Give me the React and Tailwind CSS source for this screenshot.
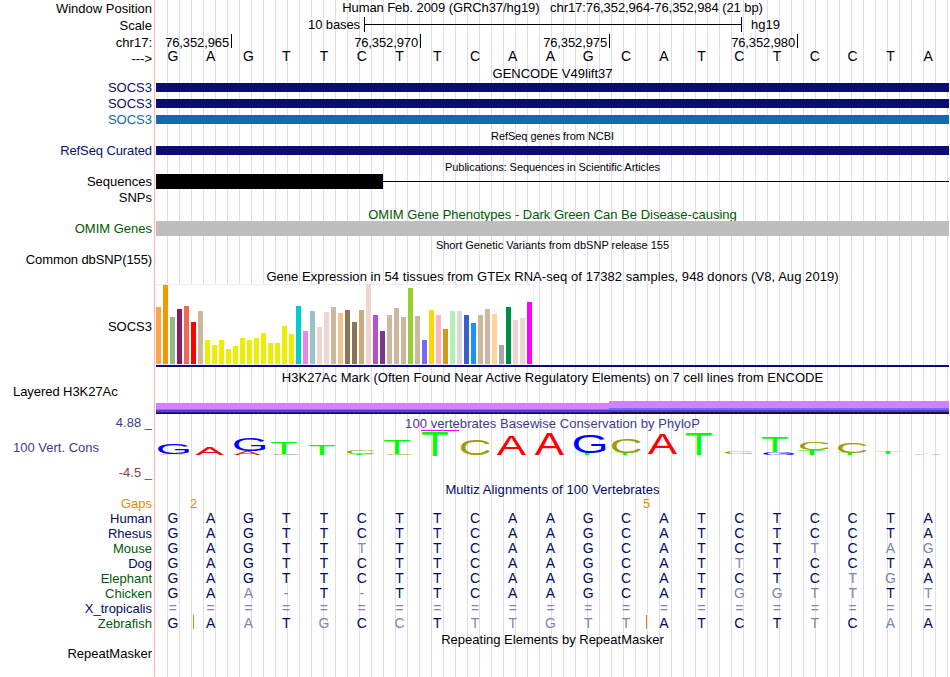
import React from 'react';

const REFERENCE = 'GAGTTCTTCAAGCATCTCCTA';

const species = [
  { name: 'Human', color: 'text-[#000a64]', bases: 'GAGTTCTTCAAGCATCTCCTA' },
  { name: 'Rhesus', color: 'text-[#000a64]', bases: 'GAGTTCTTCAAGCATCTCCTA' },
  { name: 'Mouse', color: 'text-[#005a0a]', bases: 'GAGTTTTTCAAGCATCTTCAG' },
  { name: 'Dog', color: 'text-[#000a64]', bases: 'GAGTTCTTCAAGCATTTCCTA' },
  { name: 'Elephant', color: 'text-[#005a0a]', bases: 'GAGTTCTTCAAGCATCTCTGA' },
  { name: 'Chicken', color: 'text-[#005a0a]', bases: 'GAA-T-TTCAAGCATGGTTTT' },
  { name: 'X_tropicalis', color: 'text-[#000a64]', bases: '=====================' },
  { name: 'Zebrafish', color: 'text-[#005a0a]', bases: 'GAATGCCTTTGTTATCTTCAA', inserts: true },
];

const tissues = [
  [57, '#ffa54f'], [79, '#ee9a00'], [47, '#8fbc8f'], [55, '#8b1c62'], [58, '#ee6a50'], [42, '#ff0000'],
  [53, '#cdb79e'], [24, '#eeee00'], [19, '#eeee00'], [24, '#eeee00'], [15, '#eeee00'], [18, '#eeee00'],
  [26, '#eeee00'], [24, '#eeee00'], [26, '#eeee00'], [31, '#eeee00'], [21, '#eeee00'], [21, '#eeee00'],
  [38, '#eeee00'], [30, '#eeee00'], [58, '#00cdcd'], [33, '#ee82ee'], [53, '#9ac0cd'], [37, '#eed5d2'],
  [52, '#eed5d2'], [57, '#cdb79e'], [51, '#eec591'], [54, '#8b7355'], [42, '#8b7355'], [54, '#cdaa7d'],
  [80, '#eed5d2'], [49, '#b452cd'], [33, '#7a378b'], [49, '#cdb79e'], [56, '#cdb79e'], [47, '#cdb79e'],
  [76, '#9acd32'], [48, '#cdb79e'], [24, '#7a67ee'], [54, '#ffd700'], [49, '#ffb6c1'], [35, '#cd9b1d'],
  [53, '#b4eeb4'], [53, '#d9d9d9'], [49, '#3a5fcd'], [41, '#1e90ff'], [49, '#cdb79e'], [55, '#cdb79e'],
  [50, '#ffd39b'], [19, '#a6a6a6'], [57, '#008b45'], [44, '#eed5d2'], [46, '#eed5d2'], [62, '#ff00ff'],
];

// letter, left, right, top, bottom (track pixels)
const logo = [
  ['A', 3, 30, 24, 25], ['G', 2, 33, 14, 24.3],
  ['A', 39.3, 67.7, 17, 25],
  ['A', 78, 105, 21, 25], ['G', 78, 109.3, 8, 21],
  ['C', 117, 144, 24, 25], ['T', 115, 141, 12.7, 24],
  ['T', 153, 179, 15, 25],
  ['T', 190, 216, 24, 25], ['C', 191, 219, 20, 24],
  ['C', 230, 257, 24, 25], ['T', 228, 254, 10, 24],
  ['T', 266, 292, 2, 26],
  ['C', 305, 334, 9, 25],
  ['A', 341, 370, 6, 25],
  ['A', 379, 408, 4, 25],
  ['T', 418, 444, 23, 25], ['G', 418, 449.7, 5, 23],
  ['T', 456, 482, 23, 25], ['C', 456, 485, 9, 23],
  ['A', 492, 521, 4, 24],
  ['T', 530, 556, 4, 25],
  ['C', 569, 597, 21.3, 24],
  ['G', 607, 638, 22, 25], ['T', 606, 632, 7, 22],
  ['T', 643, 669, 20, 25], ['C', 644, 673, 12, 20],
  ['T', 681, 707, 23, 25], ['C', 682, 711, 12, 23],
  ['T', 719, 745, 22, 24],
  ['A', 758, 785, 24, 25],
];

// ink box of each capital in units of a 100px font: left, width, above, below
const glyphs = {
  A: { left: 0.4, width: 66, up: 68.8, down: 0, fill: '#ff0000' },
  C: { left: 5, width: 63.5, up: 69.8, down: 1, fill: '#a09b00' },
  G: { left: 5, width: 66.3, up: 69.8, down: 1, fill: '#0000ff' },
  T: { left: 2.1, width: 56.8, up: 68.8, down: 0, fill: '#00ff00' },
};

const Row = ({ height, label, labelClass = '', children }) => (
  <div className={`flex ${height}`}>
    <div className={`w-[152px] mr-1 shrink-0 text-right ${labelClass}`}>{label}</div>
    <div className="relative w-[793px] shrink-0">{children}</div>
  </div>
);

const Title = ({ className = '', children }) => (
  <div className={`text-center whitespace-pre ${className}`}>{children}</div>
);

const Bases = ({ bases, compare }) => (
  <div className="flex text-[14px] leading-[15px]">
    {bases.split('').map((base, i) => (
      <span
        key={i}
        className={`flex-1 pr-1 text-center ${
          compare ? (base === REFERENCE[i] ? 'text-[#000a64]' : 'text-[#8084b1]') : ''
        }`}
      >
        {base}
      </span>
    ))}
  </div>
);

const Position = ({ width, children }) => (
  <div className={`flex justify-end shrink-0 ${width}`}>
    <span className="mt-px mr-[2px] tracking-[-0.12px]">{children}</span>
    <span className="w-px h-[14px] bg-black" />
  </div>
);

const ConservationLogo = () => (
  <svg className="absolute left-0 top-[15px] overflow-visible" width="793" height="27" fontFamily="Liberation Sans, Arial, sans-serif" fontSize="100">
    <rect x="265" y="0" width="38" height="1" fill="#ff00ff" />
    {logo.map(([letter, left, right, top, bottom], i) => {
      const g = glyphs[letter];
      const sx = (right - left) / g.width;
      const sy = (bottom - top) / (g.up + g.down);
      return (
        <text
          key={i}
          fill={g.fill}
          transform={`translate(${left - g.left * sx} ${bottom - g.down * sy}) scale(${sx} ${sy})`}
        >
          {letter}
        </text>
      );
    })}
  </svg>
);

const App = () => {
  return (
    <div className="w-[950px] h-[677px] overflow-hidden bg-white">
      <div className="h-full bg-[linear-gradient(to_right,#ffb4b4_1px,transparent_1px)] bg-[length:800px_100%] bg-[position:154px_0] bg-no-repeat">
        <div className="relative h-full text-[13px] leading-[15px] text-black font-['Liberation_Sans',Arial,sans-serif]">
          <div className="absolute left-[156px] top-0 w-[793px] h-full bg-[linear-gradient(to_right,#dcdcf8_1px,transparent_1px)] bg-[length:12px_100%] bg-[position:11px_0]" />

          <div className="relative">
            <Row height="h-[17px]" label="Window Position" labelClass="pt-px">
              <Title className="tracking-[-0.075px]">Human Feb. 2009 (GRCh37/hg19)   chr17:76,352,964-76,352,984 (21 bp)</Title>
            </Row>
            <Row height="h-[17px]" label="Scale" labelClass="pt-px">
              <div className="flex">
                <span className="w-[208px] pr-[4px] text-right tracking-[-0.1px]">10 bases</span>
                <span className="w-[378px] h-[15px] border-x border-black flex items-center">
                  <span className="w-full h-px bg-black" />
                </span>
                <span className="pl-[9px]">hg19</span>
              </div>
            </Row>
            <Row height="h-[15px]" label="chr17:" labelClass="pt-px">
              <div className="flex">
                <Position width="w-[76px]">76,352,965</Position>
                <Position width="w-[189px]">76,352,970</Position>
                <Position width="w-[189px]">76,352,975</Position>
                <Position width="w-[188px]">76,352,980</Position>
              </div>
            </Row>
            <Row height="h-[17px]" label="--->" labelClass="pt-[2px]">
              <Bases bases={REFERENCE} />
            </Row>

            <Row height="h-[17px]">
              <Title>GENCODE V49lift37</Title>
            </Row>
            <Row height="h-[16px]" label="SOCS3" labelClass="-mt-[3px] text-[#0c0c78]">
              <div className="h-[9px] bg-[#0c0c78]" />
            </Row>
            <Row height="h-[16px]" label="SOCS3" labelClass="-mt-[3px] text-[#0c0c78]">
              <div className="h-[9px] bg-[#0c0c78]" />
            </Row>
            <Row height="h-[15px]" label="SOCS3" labelClass="-mt-[3px] text-[#0a6eaf]">
              <div className="h-[9px] bg-[#0a6eaf]" />
            </Row>

            <Row height="h-[16px]">
              <Title className="text-[11px] leading-[12px] tracking-[-0.05px]">RefSeq genes from NCBI</Title>
            </Row>
            <Row height="h-[15px]" label="RefSeq Curated" labelClass="-mt-[3px] text-[#0c0c78] tracking-[-0.1px]">
              <div className="h-[9px] bg-[#0c0c78]" />
            </Row>

            <Row height="h-[13px]">
              <Title className="text-[11px] leading-[12px] tracking-[-0.06px]">Publications: Sequences in Scientific Articles</Title>
            </Row>
            <Row height="h-[16px]" label="Sequences">
              <div className="flex items-center h-[15px]">
                <span className="w-[227px] h-full bg-black" />
                <span className="flex-1 h-px bg-black" />
              </div>
            </Row>
            <Row height="h-[17px]" label="SNPs" />

            <Row height="h-[14px]">
              <Title className="text-[#005a00]">OMIM Gene Phenotypes - Dark Green Can Be Disease-causing</Title>
            </Row>
            <Row height="h-[18px]" label="OMIM Genes" labelClass="text-[#005a00]">
              <div className="h-[15px] bg-[#bebebe]" />
            </Row>

            <Row height="h-[13px]">
              <Title className="text-[11px] leading-[12px]">Short Genetic Variants from dbSNP release 155</Title>
            </Row>
            <Row height="h-[17px]" label="Common dbSNP(155)" labelClass="tracking-[-0.1px]" />

            <Row height="h-[15px]">
              <Title className="tracking-[0.055px]">Gene Expression in 54 tissues from GTEx RNA-seq of 17382 samples, 948 donors (V8, Aug 2019)</Title>
            </Row>
            <Row height="h-[86px]" label="SOCS3" labelClass="pt-[35px]">
              <div className="w-[378px] h-[81px] bg-white shadow-[inset_0_0_0_1px_#f0f0f0]">
                <div className="flex items-end gap-[2px] h-[80px]">
                  {tissues.map(([height, color], i) => (
                    <span key={i} className="w-[5px] shrink-0" style={{ height, backgroundColor: color }} />
                  ))}
                </div>
              </div>
              <div className="h-[2px] bg-[#0c0c78]" />
            </Row>

            <Row height="h-[14px]">
              <Title className="tracking-[0.045px]">H3K27Ac Mark (Often Found Near Active Regulatory Elements) on 7 cell lines from ENCODE</Title>
            </Row>
            <Row height="h-[31px]" label="Layered H3K27Ac" labelClass="pl-[13px] text-left! tracking-[-0.06px]">
              <div className="flex items-end h-[30px]">
                <div className="w-[453px]">
                  <div className="h-[6px] bg-[#d580ff]" />
                  <div className="h-px bg-[#6482f5]" />
                  <div className="h-[2px] bg-[#5a37cd]" />
                  <div className="h-px bg-[#321e96]" />
                  <div className="h-px bg-[#140028]" />
                </div>
                <div className="flex-1">
                  <div className="h-[7px] bg-[#d580ff]" />
                  <div className="h-[2px] bg-[#646eff]" />
                  <div className="h-[2px] bg-[#5a37cd]" />
                  <div className="h-px bg-[#32054b]" />
                  <div className="h-px bg-[#140028]" />
                </div>
              </div>
            </Row>

            <Row
              height="h-[67px]"
              labelClass="text-[#3c3c8c]"
              label={
                <>
                  <div>4.88 _</div>
                  <div className="mt-[10px] pl-[13px] text-left">100 Vert. Cons</div>
                  <div className="mt-[10px] text-[#8c3c3c]">-4.5 _</div>
                </>
              }
            >
              <Title className="pt-px text-[#3c3c8c] tracking-[0.06px]">100 vertebrates Basewise Conservation by PhyloP</Title>
              <ConservationLogo />
            </Row>

            <Row height="h-[14px]">
              <Title className="text-[#000a64] tracking-[0.09px]">Multiz Alignments of 100 Vertebrates</Title>
            </Row>
            <Row height="h-[15px]" label="Gaps" labelClass="text-[#e6870a]">
              <div className="flex text-[#e6870a] text-center">
                <span className="w-[75px]">2</span>
                <span className="w-[831px] -mr-[113px]">5</span>
              </div>
            </Row>
            {species.map(({ name, color, bases, inserts }) => (
              <Row key={name} height="h-[15px]" label={name} labelClass={color}>
                <Bases bases={bases} compare />
                {inserts && (
                  <>
                    <span className="absolute left-[37px] -top-px w-px h-[14px] bg-[#e6870a]" />
                    <span className="absolute left-[490px] -top-px w-px h-[14px] bg-[#e6870a]" />
                  </>
                )}
              </Row>
            ))}

            <Row height="h-[15px]">
              <Title className="pt-px">Repeating Elements by RepeatMasker</Title>
            </Row>
            <Row height="h-[31px]" label="RepeatMasker" />
          </div>
        </div>
      </div>
    </div>
  );
};

export default App;
